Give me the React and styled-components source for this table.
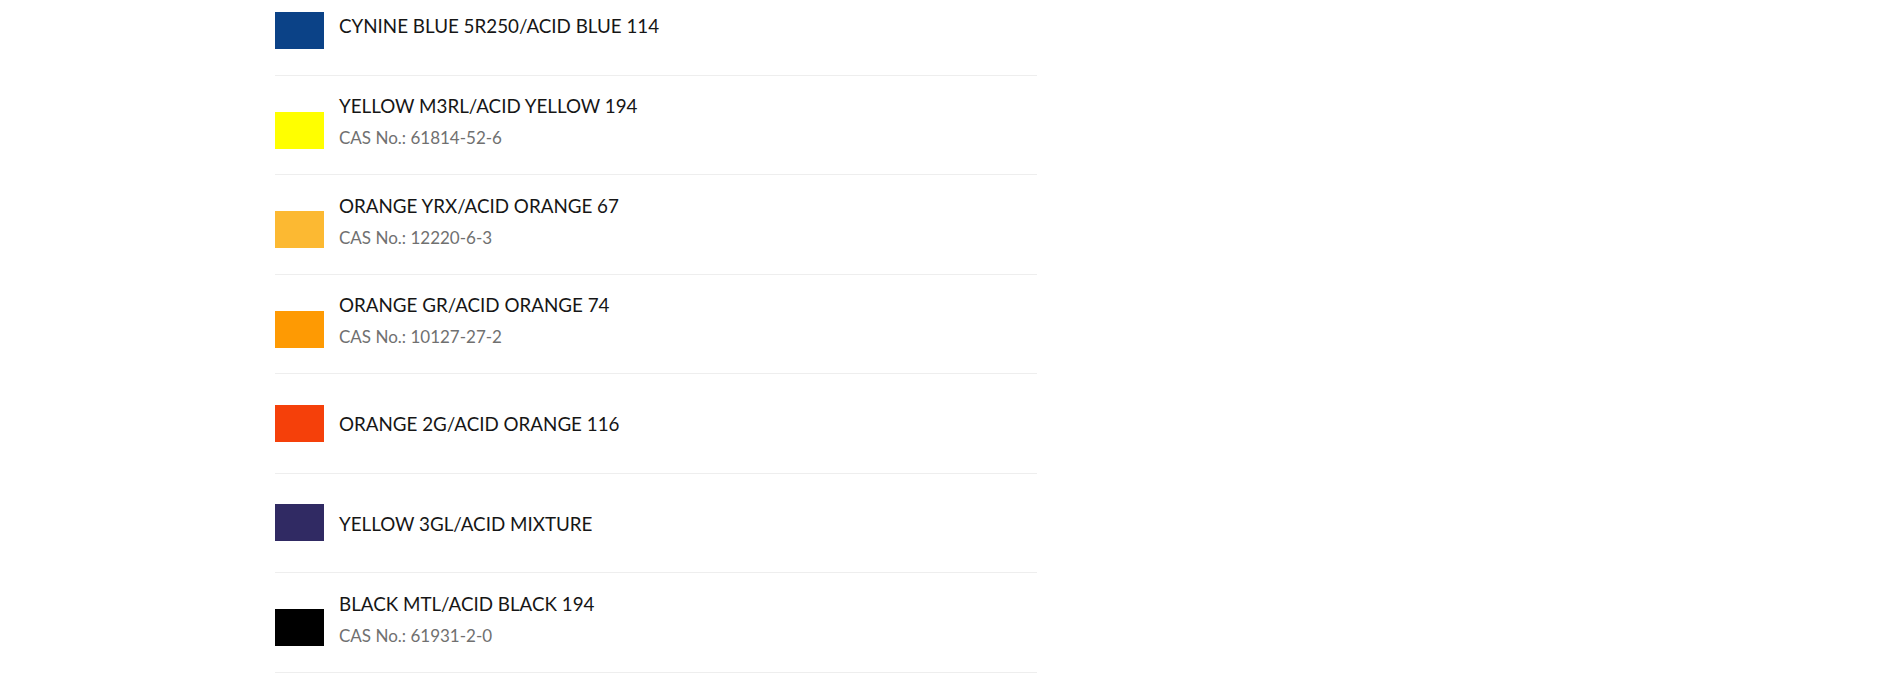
import React from "react";
import styled, { createGlobalStyle } from "styled-components";

const GlobalStyle = createGlobalStyle`
  html, body {
    margin: 0;
    padding: 0;
    background: #fff;
  }
  body {
    font-family: Lato, "Liberation Sans", sans-serif;
  }
`;

const Page = styled.div`
  height: 687px;
  overflow: hidden;
  padding-left: 275px;
`;

const List = styled.ul`
  list-style: none;
  margin: -24px 0 0; /* page is scrolled a little into the first row */
  padding: 0;
  width: 762px;
`;

const Row = styled.li`
  box-sizing: border-box;
  height: 99.5px;
  display: grid;
  grid-template-columns: 49px 1fr;
  column-gap: 15px;
  align-items: center;
  border-bottom: 1px solid #eeeeee;
`;

const Swatch = styled.span`
  display: block;
  width: 49px;
  height: 37px;
  margin-top: ${(props) => (props.$low ? "11px" : "0")};
  background: ${(props) => props.$color};
`;

const Info = styled.div`
  padding-top: 2px;
`;

const Title = styled.h4`
  margin: 0;
  font-size: 18.8px;
  line-height: 26px;
  font-weight: 400;
  color: #161616;
`;

const Cas = styled.p`
  margin: 7px 0 8px;
  font-size: 17px;
  line-height: 24px;
  color: #707070;
`;

const dyes = [
  { name: "CYNINE BLUE 5R250/ACID BLUE 114", color: "#0b4287", cas: "" },
  { name: "YELLOW M3RL/ACID YELLOW 194", color: "#ffff00", cas: "61814-52-6" },
  { name: "ORANGE YRX/ACID ORANGE 67", color: "#fcb932", cas: "12220-6-3" },
  { name: "ORANGE GR/ACID ORANGE 74", color: "#fe9a03", cas: "10127-27-2" },
  { name: "ORANGE 2G/ACID ORANGE 116", color: "#f5400a" },
  { name: "YELLOW 3GL/ACID MIXTURE", color: "#302a63" },
  { name: "BLACK MTL/ACID BLACK 194", color: "#000000", cas: "61931-2-0" },
];

const App = () => {
  return (
    <>
      <GlobalStyle />
      <Page>
        <List>
          {dyes.map((dye) => (
            <Row key={dye.name}>
              <Swatch $color={dye.color} $low={dye.cas !== undefined} />
              <Info>
                <Title>{dye.name}</Title>
                {dye.cas && <Cas>CAS No.: {dye.cas}</Cas>}
              </Info>
            </Row>
          ))}
        </List>
      </Page>
    </>
  );
};

export default App;
